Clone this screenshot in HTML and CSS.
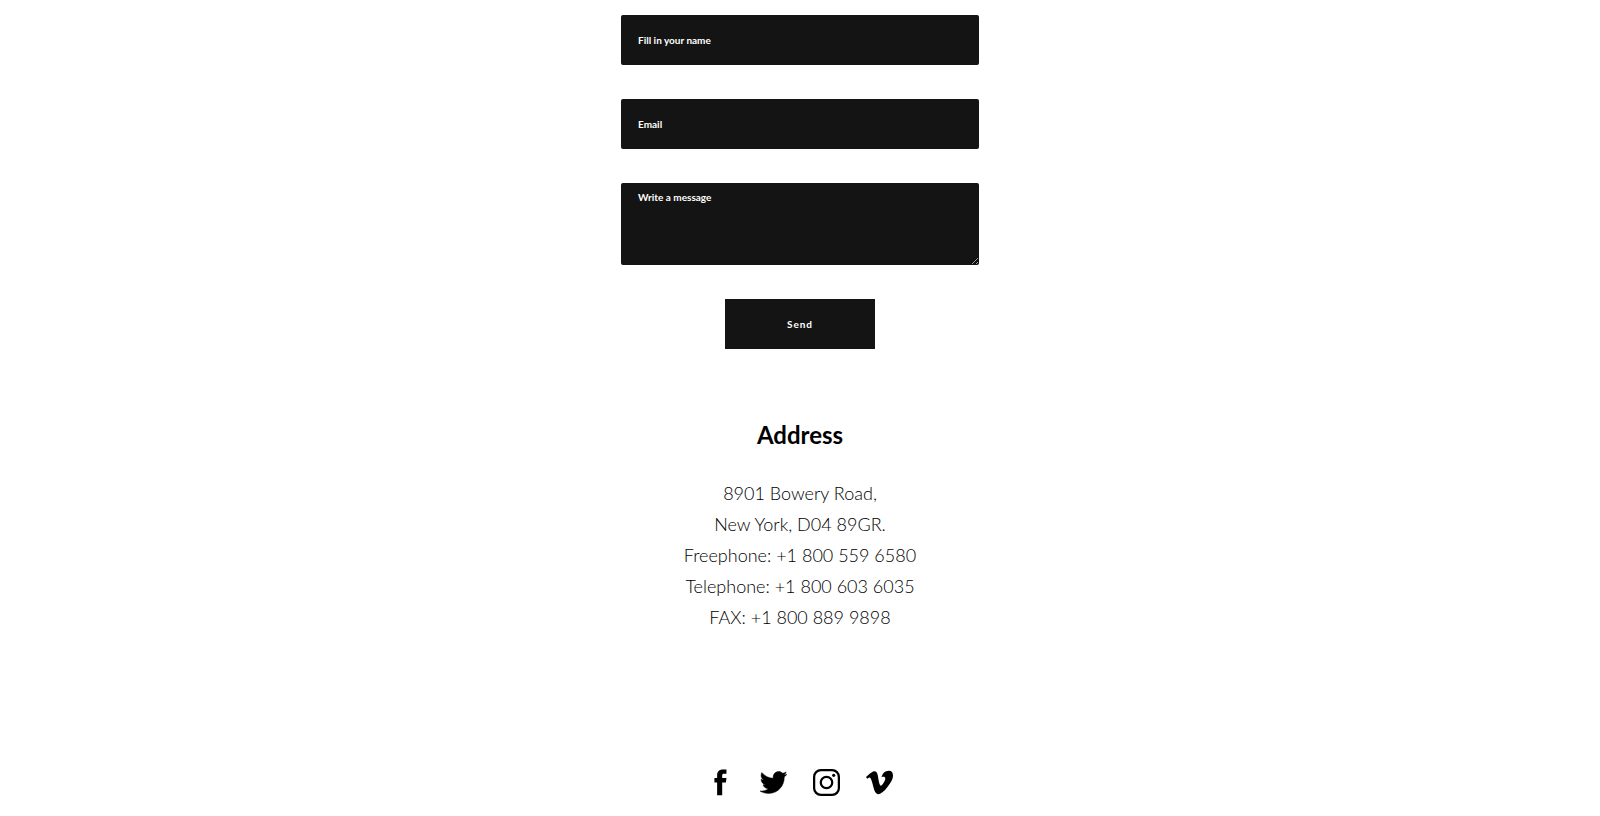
FILE: index.html
```html
<!DOCTYPE html>
<html lang="en">
<head>
<meta charset="utf-8">
<meta name="viewport" content="width=device-width, initial-scale=1">
<title>Contact</title>
<link rel="stylesheet" href="styles.css">
</head>
<body>
<main class="contact">
  <form class="form">
    <input class="field" type="text" name="name" placeholder="Fill in your name" aria-label="Fill in your name">
    <input class="field" type="email" name="email" placeholder="Email" aria-label="Email">
    <textarea class="field field-message" name="message" placeholder="Write a message" aria-label="Write a message"></textarea>
    <button class="send" type="submit">Send</button>
  </form>
  <section class="address">
    <h2 class="address-title">Address</h2>
    <address class="address-lines">
      8901 Bowery Road,<br>
      New York, D04 89GR.<br>
      Freephone: +1 800 559 6580<br>
      Telephone: +1 800 603 6035<br>
      FAX: +1 800 889 9898
    </address>
  </section>
</main>
<footer class="social">
  <a class="social-link" href="#" aria-label="Facebook"><svg class="icon" viewBox="0 0 24 24"><path d="M17.3 .5V4.3H15.2C13.9 4.3 13.5 4.8 13.5 6V8.1H17.3L16.8 12H13.5V23.3H9V12H6.6V8.1H9V5.6C9 2.3 11 .4 14 .4C15.5 .4 16.8 .4 17.3 .5z"/></svg></a>
  <a class="social-link" href="#" aria-label="Twitter"><svg class="icon" viewBox="0 0 24 24"><path class="bird" d="M23.954 4.569c-.885.389-1.83.654-2.825.775 1.014-.611 1.794-1.574 2.163-2.723-.951.555-2.005.959-3.127 1.184-.896-.959-2.173-1.559-3.591-1.559-2.717 0-4.92 2.203-4.92 4.917 0 .39.045.765.127 1.124C7.691 8.094 4.066 6.13 1.64 3.161c-.427.722-.666 1.561-.666 2.475 0 1.71.87 3.213 2.188 4.096-.807-.026-1.566-.248-2.228-.616v.061c0 2.385 1.693 4.374 3.946 4.827-.413.111-.849.171-1.296.171-.314 0-.615-.03-.916-.086.631 1.953 2.445 3.377 4.604 3.417-1.68 1.319-3.809 2.105-6.102 2.105-.39 0-.779-.023-1.17-.067 2.189 1.394 4.768 2.209 7.557 2.209 9.054 0 13.999-7.496 13.999-13.986 0-.209 0-.42-.015-.63.961-.689 1.8-1.56 2.46-2.548l-.047-.02z"/></svg></a>
  <a class="social-link" href="#" aria-label="Instagram"><svg class="icon" viewBox="0 0 24 24"><rect class="line" x="1" y="1" width="22" height="22" rx="6"/><circle class="line" cx="12" cy="12" r="5.1"/><circle cx="18.4" cy="5.6" r="1.4"/></svg></a>
  <a class="social-link" href="#" aria-label="Vimeo"><svg class="icon" viewBox="0 0 24 24"><path d="M23.977 6.416c-.105 2.338-1.739 5.543-4.894 9.609-3.268 4.247-6.026 6.37-8.29 6.37-1.409 0-2.578-1.294-3.553-3.881L5.322 11.4C4.603 8.816 3.834 7.522 3.01 7.522c-.179 0-.806.378-1.881 1.132L0 7.197c1.185-1.044 2.351-2.084 3.501-3.128C5.08 2.701 6.266 1.984 7.055 1.91c1.867-.18 3.016 1.1 3.447 3.838.465 2.953.789 4.789.971 5.507.539 2.45 1.131 3.674 1.776 3.674.502 0 1.256-.796 2.265-2.385 1.004-1.589 1.54-2.797 1.612-3.628.144-1.371-.395-2.061-1.614-2.061-.574 0-1.167.121-1.777.391 1.186-3.868 3.434-5.757 6.762-5.637 2.473.06 3.628 1.664 3.493 4.797z"/></svg></a>
</footer>
</body>
</html>
```
FILE: styles.css
```css
* {
  box-sizing: border-box;
}

body {
  margin: 0;
  padding: 15px 16px 20px;
  background: #fff;
  color: #000;
  font-family: Lato, "Liberation Sans", sans-serif;
}

.form {
  display: flex;
  flex-direction: column;
  align-items: center;
  gap: 34px;
}

.field {
  width: 100%;
  max-width: 358px;
  height: 50px;
  margin: 0;
  padding: 7px 17px 8px;
  border: 0;
  border-radius: 2px;
  background: #141414;
  color: #fff;
  font-family: inherit;
  font-size: 10px;
  font-weight: 700;
  line-height: 14px;
}

.field::placeholder {
  color: #fff;
  opacity: 1;
}

.field-message {
  height: 82px;
  resize: both;
}

.send {
  width: 150px;
  height: 50px;
  padding: 0;
  border: 0;
  background: #141414;
  color: #fff;
  font-family: inherit;
  font-size: 10px;
  font-weight: 700;
  letter-spacing: 1px;
}

.address {
  margin-top: 70px;
  text-align: center;
}

.address-title {
  margin: 0 0 27px;
  font-size: 24px;
  font-weight: 700;
  line-height: 32px;
}

.address-lines {
  font-size: 18px;
  font-style: normal;
  font-weight: 300;
  line-height: 31px;
}

.social {
  display: flex;
  justify-content: center;
  gap: 26px;
  margin-top: 136px;
}

.social-link {
  display: block;
  color: #000;
}

.icon {
  display: block;
  width: 27px;
  height: 27px;
  fill: currentColor;
}

.bird {
  stroke: currentColor;
  stroke-width: .4;
}

.line {
  fill: none;
  stroke: currentColor;
  stroke-width: 2;
}
```
